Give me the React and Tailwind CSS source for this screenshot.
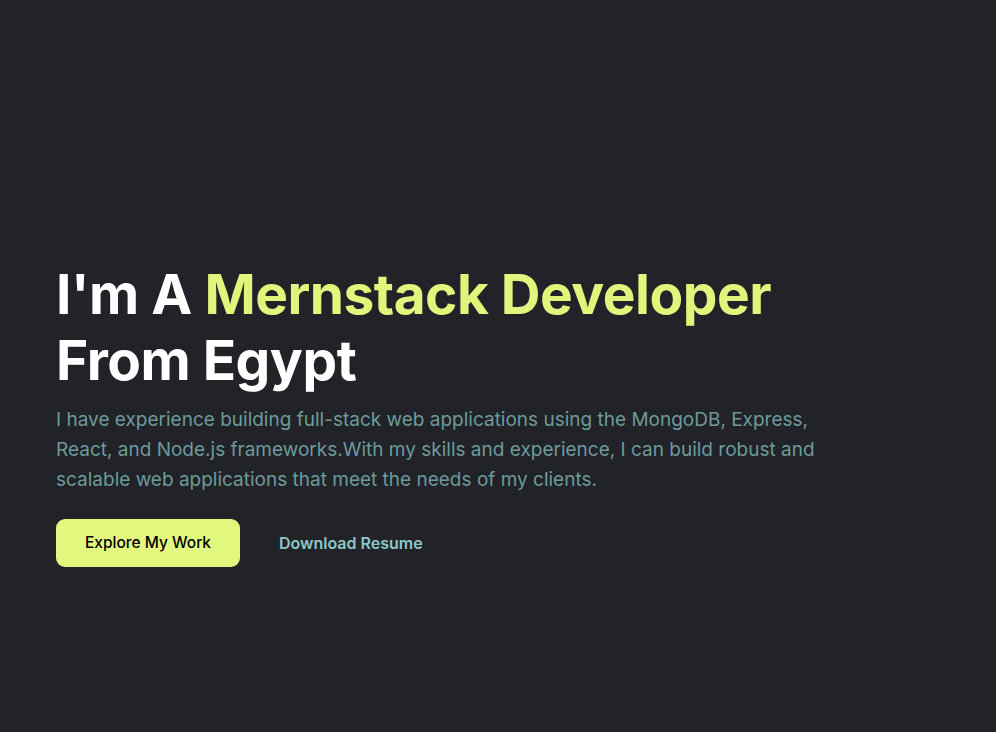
import React from "react";

const App = () => {
  return (
    <div className="min-h-[732px] w-full bg-[#212328] font-['Inter',sans-serif]">
      <section className="px-14 pt-[261px]">
        <h1 className="text-[55px] font-bold leading-[66px] tracking-[-0.5px] text-white">
          I'm A <span className="text-[#e0f57b]">Mernstack Developer</span>
          <br />
          From Egypt
        </h1>
        <p className="mt-[12px] max-w-[790px] text-[19px] leading-[30px] text-[#6e9a9b]">
          I have experience building full-stack web applications using the MongoDB, Express, React, and Node.js frameworks.With my skills and experience, I can build robust and scalable web applications that meet the needs of my clients.
        </p>
        <div className="mt-[24px] flex items-center gap-[39px]">
          <button className="h-[48px] w-[184px] rounded-[9px] bg-[#e2f77e] text-[15.5px] font-medium text-black">
            Explore My Work
          </button>
          <button className="text-[16px] font-semibold text-[#8ec7c7]">Download Resume</button>
        </div>
      </section>
    </div>
  );
};

export default App;
